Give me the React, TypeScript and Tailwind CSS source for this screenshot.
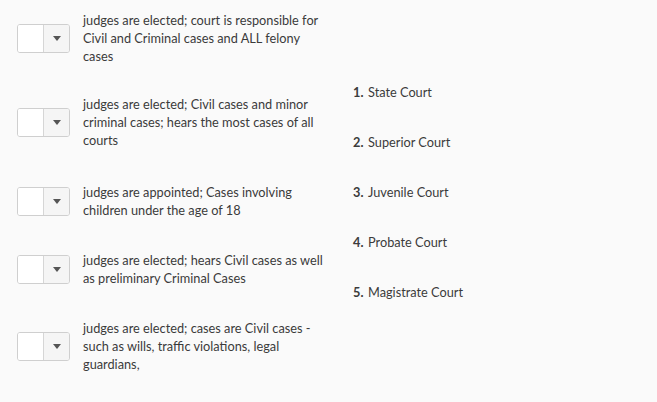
import React from "react";

const rows: { lines: string[]; mt: string }[] = [
  { lines: ["judges are elected; court is responsible for", "Civil and Criminal cases and ALL felony", "cases"], mt: "mt-[11px]" },
  { lines: ["judges are elected; Civil cases and minor", "criminal cases; hears the most cases of all", "courts"], mt: "mt-[30px]" },
  { lines: ["judges are appointed; Cases involving", "children under the age of 18"], mt: "mt-[34px]" },
  { lines: ["judges are elected; hears Civil cases as well", "as preliminary Criminal Cases"], mt: "mt-[32px]" },
  { lines: ["judges are elected; cases are Civil cases -", "such as wills, traffic violations, legal", "guardians,"], mt: "mt-[32px]" },
];

const options = ["State Court", "Superior Court", "Juvenile Court", "Probate Court", "Magistrate Court"];

function SelectBox() {
  return (
    <div className="flex h-[29px] w-[53px] shrink-0 overflow-hidden rounded-[3px] border border-[#cfcfcf] bg-white">
      <div className="w-[25px] bg-white" />
      <div className="flex flex-1 items-center justify-center border-l border-[#d6d6d6] bg-[#f5f5f5]">
        <svg width="8" height="5" viewBox="0 0 8 5">
          <path d="M0 0 L8 0 L4 5 Z" fill="#555" />
        </svg>
      </div>
    </div>
  );
}

export default function App() {
  return (
    <div
      className="flex h-[402px] w-[657px] bg-[#fafafa] text-[12.75px] leading-[18px] text-[#3b3b3b]"
      style={{ fontFamily: "Lato, 'Noto Sans', sans-serif" }}
    >
      <div className="flex w-[353px] flex-col pl-[17px]">
        {rows.map((r, i) => (
          <div key={i} className={`${r.mt} flex items-center`}>
            <SelectBox />
            <div className="ml-[13px] whitespace-nowrap">
              {r.lines.map((l, j) => (
                <div key={j}>{l}</div>
              ))}
            </div>
          </div>
        ))}
      </div>
      <div className="flex flex-col gap-[32px] pt-[83px]">
        {options.map((o, i) => (
          <div key={i} className="flex h-[18px] items-center">
            <span className="w-[15px] font-bold">{i + 1}.</span>
            <span>{o}</span>
          </div>
        ))}
      </div>
    </div>
  );
}
